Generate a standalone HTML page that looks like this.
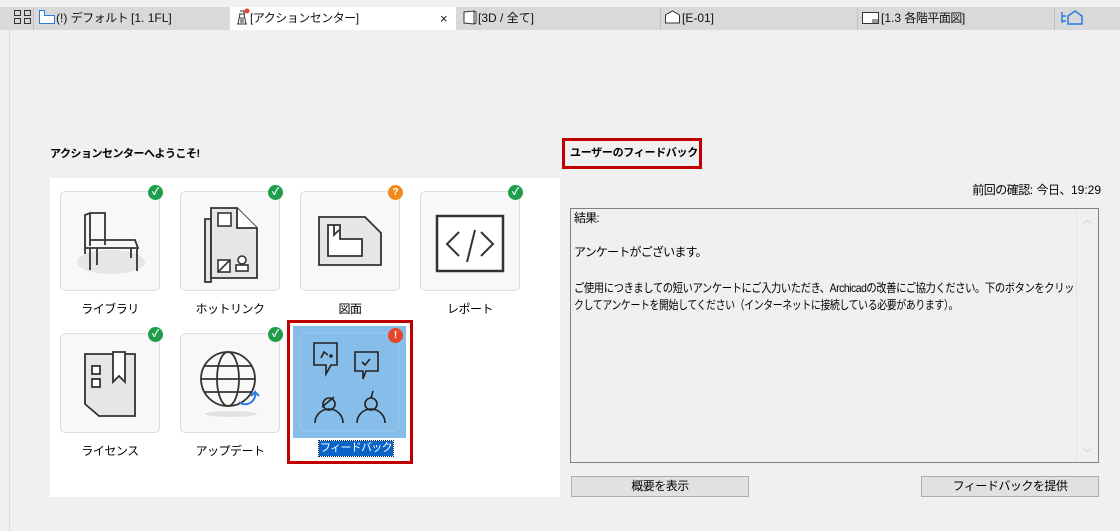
<!DOCTYPE html>
<html><head><meta charset="utf-8"><style>
*{margin:0;padding:0;box-sizing:border-box}
body{width:1120px;height:531px;background:#f0f0f0;font-family:"Liberation Sans","Noto Sans CJK JP",sans-serif;font-size:12px;color:#000;position:relative;overflow:hidden;letter-spacing:-0.5px}
.abs{position:absolute;white-space:nowrap}
.l{letter-spacing:0}
.tabbar{left:0;top:7px;width:1120px;height:23px;background:#d9d9d9}
.tab{top:7px;height:23px;line-height:23px;font-size:12px;color:#111;white-space:nowrap}
.sep{top:7px;width:1px;height:23px;background:#c0c0c0}
.panel{left:50px;top:178px;width:510px;height:319px;background:#fff}
.tile{width:100px;height:100px;background:#f8f8f8;border:1px solid #ddd;border-radius:5px}
.lbl{width:120px;text-align:center;font-size:12px}
.badge{width:15px;height:15px;border-radius:50%;color:#fff;font-size:10px;font-weight:bold;text-align:center;line-height:15px;letter-spacing:0}
.g{background:#1e9e4a}
.btn{height:21px;background:#e1e1e1;border:1px solid #adadad;text-align:center;line-height:19px;font-size:12px}
</style></head><body>
<div class="abs" style="left:0;top:0;width:1120px;height:7px;background:#f0f0f0"></div>
<div class="abs tabbar"></div>
<div class="abs" style="left:9px;top:30px;width:1px;height:501px;background:#dadada"></div>
<div class="abs" style="left:230px;top:7px;width:226px;height:23px;background:#fff"></div>
<div class="abs tab" style="left:13px"><svg width="20" height="16" viewBox="0 0 20 16" style="vertical-align:-3px"><g fill="none" stroke="#333"><rect x="1.5" y="1.5" width="6" height="5"/><rect x="11.5" y="1.5" width="6" height="5"/><rect x="1.5" y="9.5" width="6" height="5"/><rect x="11.5" y="9.5" width="6" height="5"/></g></svg></div>
<div class="abs sep" style="left:33px"></div>
<div class="abs tab" style="left:38px"><svg width="18" height="16" style="vertical-align:-3px"><path d="M1.5 1.5h5v5h10v8h-15z" fill="#fff" stroke="#2a7be0"/></svg><span class="l">(!) </span>デフォルト <span class="l">[1. 1FL]</span></div>
<div class="abs tab" style="left:234px"><svg width="16" height="18" style="vertical-align:-4px"><path d="M4 16l2-10h4l2 10M3 16h10M5 6h6M6 3h4v3M7 9v6M9 9v6" fill="none" stroke="#333"/><circle cx="13" cy="3" r="2.5" fill="#e9452a"/></svg>[アクションセンター]</div>
<div class="abs tab" style="left:440px;font-size:13px">×</div>
<div class="abs tab l" style="left:462px"><svg width="16" height="16" style="vertical-align:-3px"><path d="M2 3l10-1v13l-10-1zM12 2l2 1v11l-2 1" fill="#fff" stroke="#333"/></svg>[3D / 全て]</div>
<div class="abs sep" style="left:660px"></div>
<div class="abs tab l" style="left:664px"><svg width="18" height="16" style="vertical-align:-3px"><path d="M1.5 6l7-4 7 4v8h-14z" fill="#fff" stroke="#333"/></svg>[E-01]</div>
<div class="abs sep" style="left:857px"></div>
<div class="abs tab" style="left:861px"><svg width="20" height="16" style="vertical-align:-3px"><rect x="1.5" y="3.5" width="16" height="11" fill="#fff" stroke="#333"/><path d="M11 11h6M11 13h6" stroke="#333"/></svg><span class="l">[1.3 </span>各階平面図]</div>
<div class="abs sep" style="left:1054px"></div>
<div class="abs tab" style="left:1060px"><svg width="60" height="18" style="vertical-align:-4px"><path d="M2 4v11M2 8h4M2 13h4M8 8l7-5 7 5v8H8z" fill="none" stroke="#2a7be0" stroke-width="1.5"/></svg></div>

<div class="abs" style="left:50px;top:145px;font-weight:bold;font-size:11px">アクションセンターへようこそ!</div>
<div class="abs panel"></div>

<div class="abs tile" style="left:60px;top:191px"><svg width="100" height="100"><ellipse cx="50" cy="70" rx="34" ry="12" fill="#e6e6e6"/><g fill="none" stroke="#333" stroke-width="1.8"><path d="M24 62V23l5-2h15v32M29 21v33M24 56h53l-3-8H29M29 54v-5M29 56v22M36 56v17M76 57v22M70 56v10M33 48h41"/></g></svg></div>
<div class="abs badge g" style="left:148px;top:185px">✓</div>
<div class="abs lbl" style="left:50px;top:300px">ライブラリ</div>

<div class="abs tile" style="left:180px;top:191px"><svg width="100" height="100"><g fill="#e6e6e6" stroke="#333" stroke-width="1.8"><path d="M24 27h6v63H24z"/><path d="M30 16h26l20 20v50H30z"/><path d="M56 16v20h20" fill="#fff"/></g><g fill="none" stroke="#333" stroke-width="1.6"><rect x="37" y="21" width="13" height="13" fill="#fff"/><rect x="37" y="68" width="12" height="12" fill="#fff"/><path d="M37 80l12-12"/><circle cx="61" cy="68" r="4" fill="#fff"/><rect x="55" y="73" width="12" height="6" fill="#fff"/></g></svg></div>
<div class="abs badge g" style="left:268px;top:185px">✓</div>
<div class="abs lbl" style="left:170px;top:300px">ホットリンク</div>

<div class="abs tile" style="left:300px;top:191px"><svg width="100" height="100"><g stroke="#333" stroke-width="1.8"><path d="M18 25h46l16 16v32H18z" fill="#e6e6e6"/><path d="M27 33h12v14h22v17H27z" fill="#fff"/><path d="M33 33v10l5-5" fill="none"/></g></svg></div>
<div class="abs badge" style="left:388px;top:185px;background:#f08a1d">?</div>
<div class="abs lbl" style="left:290px;top:300px">図面</div>

<div class="abs tile" style="left:420px;top:191px"><svg width="100" height="100"><rect x="16" y="24" width="66" height="55" fill="#fff" stroke="#333" stroke-width="2.5"/><g fill="none" stroke="#333" stroke-width="2"><path d="M38 40L26 52l12 12M60 40l12 12-12 12M54 38l-8 32"/></g></svg></div>
<div class="abs badge g" style="left:508px;top:185px">✓</div>
<div class="abs lbl" style="left:410px;top:300px">レポート</div>

<div class="abs tile" style="left:60px;top:333px"><svg width="100" height="100"><g stroke="#333" stroke-width="1.8"><path d="M24 20h50v62H38l-14-12z" fill="#e6e6e6"/><path d="M52 18h12v30l-6-6-6 6z" fill="#fff"/><rect x="31" y="32" width="8" height="8" fill="#fff"/><rect x="31" y="45" width="8" height="8" fill="#fff"/></g></svg></div>
<div class="abs badge g" style="left:148px;top:327px">✓</div>
<div class="abs lbl" style="left:50px;top:442px">ライセンス</div>

<div class="abs tile" style="left:180px;top:333px"><svg width="100" height="100"><ellipse cx="50" cy="80" rx="26" ry="3" fill="#e3e3e3"/><g fill="none" stroke="#333" stroke-width="1.8"><circle cx="47" cy="45" r="27"/><ellipse cx="47" cy="45" rx="11" ry="27"/><path d="M20 45h54M24 32h46M24 58h46"/></g><path d="M58 68a10 10 0 0 0 16-10l-4 4m4-4l4 4" fill="none" stroke="#2a7be0" stroke-width="2"/></svg></div>
<div class="abs badge g" style="left:268px;top:327px">✓</div>
<div class="abs lbl" style="left:170px;top:442px">アップデート</div>

<div class="abs" style="left:287px;top:320px;width:126px;height:144px;border:3px solid #c00000"></div>
<div class="abs" style="left:293px;top:326px;width:113px;height:112px;background:#87bde9"><svg width="113" height="112"><rect x="7" y="7" width="99" height="98" rx="5" fill="none" stroke="#9ac7ec"/><g fill="none" stroke="#222" stroke-width="1.6"><path d="M21 17h23v22h-6l-5 9v-9H21z"/><path d="M28 32l3-6 4 3"/><circle cx="38" cy="30" r="1"/><path d="M62 26h23v19H73l-3 8v-8h-8z"/><path d="M69 36l3 3 5-6"/><circle cx="36" cy="78" r="6"/><path d="M29 81l12-10M22 97a14 14 0 0 1 28 0M64 97a14 14 0 0 1 28 0"/><circle cx="78" cy="78" r="6"/><path d="M78 72l2-7"/></g></svg></div>
<div class="abs badge" style="left:388px;top:328px;background:#e9452a">!</div>
<div class="abs" style="left:319px;top:441px;height:15px;padding:0 1px;background:#0a64c8;color:#fff;outline:1px dotted #222;line-height:15px;font-size:11px;letter-spacing:-0.7px">フィードバック</div>

<div class="abs" style="left:562px;top:138px;width:140px;height:31px;border:3px solid #c00000;font-weight:bold;font-size:11px;line-height:25px;padding-left:5px;letter-spacing:-0.3px">ユーザーのフィードバック</div>
<div class="abs" style="left:900px;top:181px;width:201px;text-align:right">前回の確認<span class="l">: </span>今日、<span class="l">19:29</span></div>
<div class="abs" style="left:570px;top:208px;width:529px;height:255px;border:1px solid #828282;background:#f0f0f0"></div>
<div class="abs" style="left:1076px;top:209px;width:1px;height:253px;background:#e4e4e4"></div>
<div class="abs" style="left:1083px;top:213px;color:#c0c0c0;font-size:9px">︿</div>
<div class="abs" style="left:1083px;top:446px;color:#c0c0c0;font-size:9px">﹀</div>
<div class="abs" style="left:574px;top:210px;line-height:17px;letter-spacing:-0.8px">結果<span class="l">:</span><br><br>アンケートがございます。</div>
<svg class="abs" style="left:0;top:0" width="1120" height="531"><g font-family="Liberation Sans, Noto Sans CJK JP, sans-serif" font-size="12" fill="#000"><text x="574" y="292" textLength="500" lengthAdjust="spacingAndGlyphs">ご使用につきましての短いアンケートにご入力いただき、Archicadの改善にご協力ください。下のボタンをクリッ</text><text x="574" y="309" textLength="384" lengthAdjust="spacingAndGlyphs">クしてアンケートを開始してください（インターネットに接続している必要があります）。</text></g></svg>
<div class="abs btn" style="left:571px;top:476px;width:178px">概要を表示</div>
<div class="abs btn" style="left:921px;top:476px;width:178px">フィードバックを提供</div>
</body></html>
